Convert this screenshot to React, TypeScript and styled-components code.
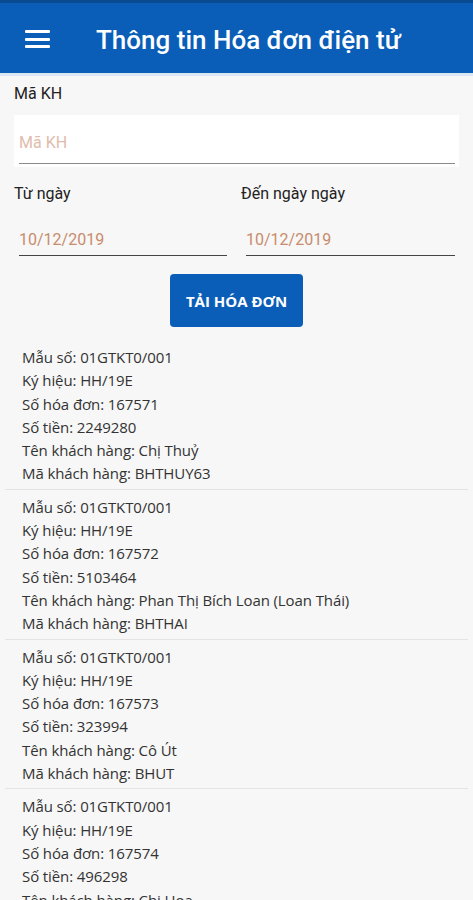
import React from "react";
import styled, { createGlobalStyle } from "styled-components";

const Global = createGlobalStyle`
  html, body { margin: 0; padding: 0; background: #f7f7f7; }
  body { font-family: Roboto, "Noto Sans", Arial, sans-serif; }
  * { box-sizing: border-box; }
`;

const Page = styled.div`
  width: 473px;
  height: 900px;
  overflow: hidden;
  background: #f7f7f7;
`;

const Header = styled.header`
  height: 76px;
  background: #0a5eb7;
  border-top: 3px solid #0a4a90;
  border-bottom: 3px solid #dbe7f5;
  display: flex;
  align-items: center;
  padding-left: 25px;
  gap: 46px;
`;

const MenuButton = styled.div`
  width: 25px;
  height: 18px;
  display: flex;
  flex-direction: column;
  justify-content: space-between;
  margin-top: 2px;
`;

const MenuLine = styled.span`
  display: block;
  height: 3px;
  background: #ffffff;
  border-radius: 1px;
`;

const Title = styled.h1`
  margin: 4px 0 0 0;
  color: #ffffff;
  font-family: Roboto, Arial, sans-serif;
  font-weight: 500;
  font-size: 26px;
  letter-spacing: 0;
`;

const Form = styled.section`
  padding: 6px 14px 0 14px;
`;

const Label = styled.div`
  font-family: Roboto, Arial, sans-serif;
  font-size: 16px;
  color: #222;
  height: 24px;
  line-height: 24px;
`;

const InputBox = styled.div`
  margin-top: 9px;
  background: #ffffff;
  height: 52px;
  padding: 0 4px 0 5px;
  display: flex;
  flex-direction: column;
  justify-content: flex-end;
`;

const Field = styled.div<{ $line: string; $color: string }>`
  font-family: Roboto, Arial, sans-serif;
  font-size: 16px;
  color: ${(p) => p.$color};
  height: 48px;
  line-height: 54px;
  border-bottom: 1.5px solid ${(p) => p.$line};
  margin-bottom: 3px;
`;

const DateRow = styled.div`
  display: grid;
  grid-template-columns: 213px 1fr;
  column-gap: 14px;
  margin-top: 15px;
`;

const DateCol = styled.div`
  display: flex;
  flex-direction: column;
`;

const DateField = styled.div<{ $right?: boolean }>`
  margin: 10px ${(p) => (p.$right ? "4px" : "0")} 0 5px;
  font-family: Roboto, Arial, sans-serif;
  font-size: 16px;
  color: #c88c6c;
  height: 40px;
  line-height: 48px;
  border-bottom: 1.5px solid #444;
`;

const ButtonRow = styled.div`
  display: flex;
  justify-content: center;
  margin-top: 18px;
`;

const LoadButton = styled.button`
  width: 133px;
  height: 53px;
  border: none;
  border-radius: 4px;
  background: #0a5eb7;
  color: #fff;
  font-family: "Open Sans", Roboto, Arial, sans-serif;
  font-weight: 700;
  font-size: 15px;
  padding: 0;
`;

const List = styled.div`
  margin-top: 19px;
  padding: 0 5px;
`;

const Item = styled.div`
  padding: 0 0 3px 17px;
  border-bottom: 1.5px solid #e4e4e4;
  & + & {
    padding-top: 6px;
  }
`;

const Line = styled.div`
  font-family: "Open Sans", "Noto Sans", Arial, sans-serif;
  font-size: 15px;
  line-height: 23.3px;
  color: #333;
  white-space: nowrap;
  letter-spacing: -0.1px;
`;

const invoices = [
  { no: "167571", amount: "2249280", name: "Chị Thuỷ", code: "BHTHUY63" },
  { no: "167572", amount: "5103464", name: "Phan Thị Bích Loan (Loan Thái)", code: "BHTHAI" },
  { no: "167573", amount: "323994", name: "Cô Út", code: "BHUT" },
  { no: "167574", amount: "496298", name: "Chị Hoa", code: "BHHOA" },
];

export default function App() {
  return (
    <Page>
      <Global />
      <Header>
        <MenuButton>
          <MenuLine />
          <MenuLine />
          <MenuLine />
        </MenuButton>
        <Title>Thông tin Hóa đơn điện tử</Title>
      </Header>
      <Form>
        <Label>Mã KH</Label>
        <InputBox>
          <Field $line="#8a8a8a" $color="#dfbcac">Mã KH</Field>
        </InputBox>
        <DateRow>
          <DateCol>
            <Label>Từ ngày</Label>
            <DateField>10/12/2019</DateField>
          </DateCol>
          <DateCol>
            <Label>Đến ngày ngày</Label>
            <DateField $right>10/12/2019</DateField>
          </DateCol>
        </DateRow>
        <ButtonRow>
          <LoadButton>TẢI HÓA ĐƠN</LoadButton>
        </ButtonRow>
      </Form>
      <List>
        {invoices.map((inv) => (
          <Item key={inv.no}>
            <Line>Mẫu số: 01GTKT0/001</Line>
            <Line>Ký hiệu: HH/19E</Line>
            <Line>Số hóa đơn: {inv.no}</Line>
            <Line>Số tiền: {inv.amount}</Line>
            <Line>Tên khách hàng: {inv.name}</Line>
            <Line>Mã khách hàng: {inv.code}</Line>
          </Item>
        ))}
      </List>
    </Page>
  );
}
